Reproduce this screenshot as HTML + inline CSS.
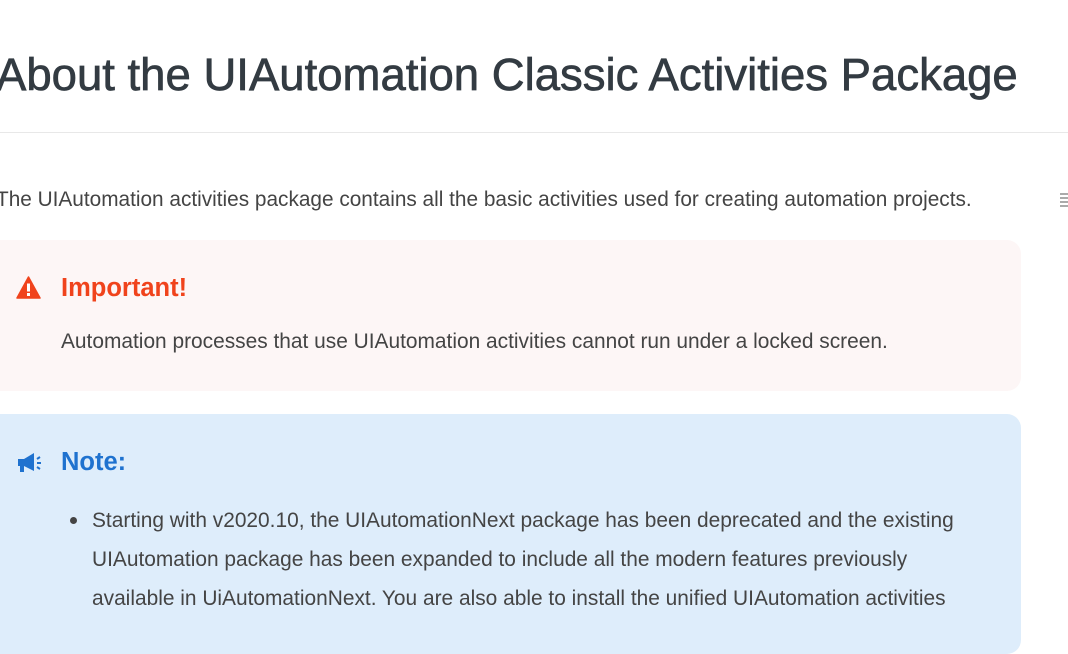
<!DOCTYPE html>
<html><head><style>
body{margin:0;width:1068px;height:629px;overflow:hidden;background:#fff;font-family:"Liberation Sans",sans-serif;color:#3b4045;position:relative}
h1{position:absolute;left:-4px;top:49px;margin:0;font-size:45.5px;font-weight:normal;color:#333b42;white-space:nowrap;-webkit-text-stroke:0.7px #333b42}
.hr{position:absolute;left:0;top:132px;width:1068px;height:1px;background:#e8e8e8}
.p{position:absolute;left:-4px;top:188px;font-size:20.8px;white-space:nowrap;color:#444}
.box{position:absolute;left:-20px;width:1041px;border-radius:14px}
.imp{top:240px;height:151px;background:#fdf6f6}
.note{top:414px;height:240px;background:#deedfb}
.t{position:absolute;left:61px;font-size:25.5px;font-weight:bold;white-space:nowrap}
.txt{position:absolute;font-size:20.9px;color:#444;white-space:nowrap;line-height:39px}
</style></head><body>
<h1>About the UIAutomation Classic Activities Package</h1>
<div class="hr"></div>
<div class="p">The UIAutomation activities package contains all the basic activities used for creating automation projects.</div>
<div style="position:absolute;left:1060px;top:193px;width:8px">
<div style="height:2px;background:#aaa;margin-bottom:2px"></div><div style="height:2px;background:#aaa;margin-bottom:2px"></div><div style="height:2px;background:#aaa;margin-bottom:2px"></div><div style="height:2px;background:#aaa"></div></div>
<div class="box imp"></div>
<svg style="position:absolute;left:16px;top:276px" width="25" height="23" viewBox="0 0 25 23"><path d="M12.5 1L24 22H1Z" fill="#f0431c" stroke="#f0431c" stroke-linejoin="round" stroke-width="1.5"/><rect x="11" y="7.5" width="3" height="8" fill="#fff"/><rect x="11" y="17" width="3" height="3" fill="#fff"/></svg>
<div class="t" style="top:274px;color:#f0431c">Important!</div>
<div class="txt" style="left:61px;top:322px">Automation processes that use UIAutomation activities cannot run under a locked screen.</div>
<div class="box note"></div>
<svg style="position:absolute;left:16px;top:452px" width="26" height="22" viewBox="0 0 26 22"><path d="M2 7h6l10-6v18l-10-5H8v6H4v-6H2z" fill="#1f72cf"/><path d="M21 7l3-2M21 11h4M21 15l3 2" stroke="#1f72cf" stroke-width="2"/></svg>
<div class="t" style="top:448px;color:#1f72cf">Note:</div>
<div style="position:absolute;left:70px;top:517px;width:7px;height:7px;border-radius:50%;background:#444"></div>
<div class="txt" style="left:92px;top:501px">Starting with v2020.10, the UIAutomationNext package has been deprecated and the existing<br>UIAutomation package has been expanded to include all the modern features previously<br>available in UiAutomationNext. You are also able to install the unified UIAutomation activities</div>
</body></html>
